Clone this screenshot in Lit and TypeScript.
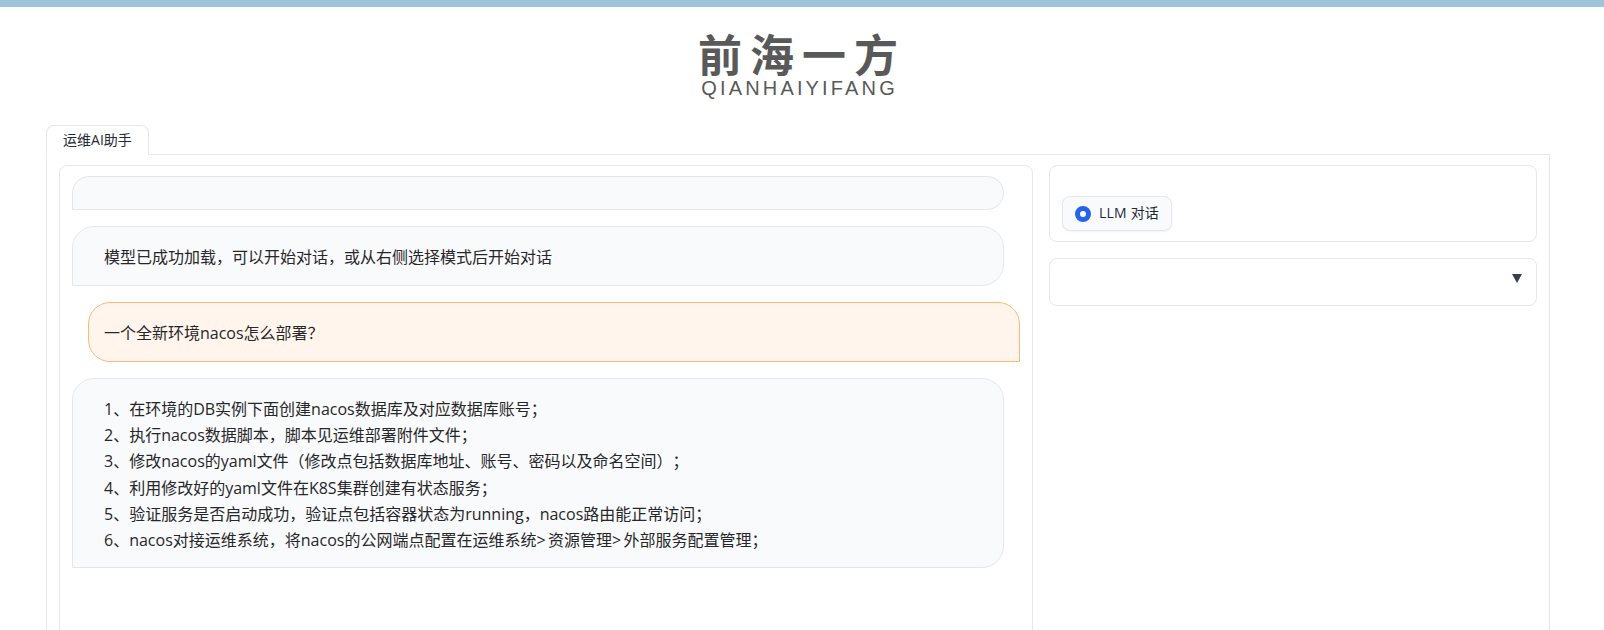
import { LitElement, html, css } from "lit";
import { customElement } from "lit/decorators.js";

const gt = html`<span class="gt">&gt;</span>`;
const answer = [
  html`1、在环境的DB实例下面创建nacos数据库及对应数据库账号；`,
  html`2、执行nacos数据脚本，脚本见运维部署附件文件；`,
  html`3、修改nacos的yaml文件（修改点包括数据库地址、账号、密码以及命名空间）；`,
  html`4、利用修改好的yaml文件在K8S集群创建有状态服务；`,
  html`5、验证服务是否启动成功，验证点包括容器状态为running，nacos路由能正常访问；`,
  html`6、nacos对接运维系统，将nacos的公网端点配置在运维系统${gt}资源管理${gt}外部服务配置管理；`,
];

@customElement("app-root")
export class AppRoot extends LitElement {
  static styles = css`
    :host {
      display: block;
      height: 630px;
      overflow: hidden;
      background: #fff;
      color: #27272a;
      font-family: "Open Sans", "Noto Sans CJK SC", sans-serif;
      font-size: 16px;
      font-feature-settings: "chws" 0, "palt" 0;
      text-spacing-trim: space-all;
    }
    .topbar { height: 7px; background: #a0c4da; }
    .logo {
      height: 118px;
      box-sizing: border-box;
      padding-right: 8px;
      display: flex;
      flex-direction: column;
      align-items: center;
      color: #595959;
    }
    .logo-cn {
      margin-top: 21px;
      font: 700 44px/50px "Noto Sans CJK SC", sans-serif;
      letter-spacing: 8px;
      margin-right: -8px;
    }
    .logo-en {
      font: 400 20px/20px "Liberation Sans", sans-serif;
      letter-spacing: 3.15px;
      margin-right: -3.15px;
    }
    .tabs { padding: 0 54px 0 46px; }
    .tab {
      box-sizing: border-box;
      width: 103px;
      height: 30px;
      margin-bottom: -1px;
      padding-bottom: 3px;
      position: relative;
      display: flex;
      align-items: center;
      justify-content: center;
      background: #fff;
      border: 1px solid #e5e7eb;
      border-bottom-color: #fff;
      border-radius: 8px 8px 0 0;
      font-size: 14px;
      color: #1f2937;
    }
    .panel {
      border: 1px solid #e5e7eb;
      padding: 10px 12px;
      display: grid;
      grid-template-columns: 974px 1fr;
      gap: 16px;
      height: 600px;
    }
    .card {
      box-sizing: border-box;
      border: 1px solid #e5e7eb;
      border-radius: 8px;
      background: #fff;
    }
    .chat {
      height: 600px;
      padding: 10px 28px 0 12px;
      display: flex;
      flex-direction: column;
      gap: 16px;
    }
    .bubble {
      border: 1px solid #e5e7eb;
      background: #f9fafb;
      border-radius: 22px 22px 22px 0;
      padding: 17px 31px 15px;
      line-height: 26px;
      box-sizing: border-box;
    }
    .bubble.empty { height: 34px; padding: 0; }
    .bubble.user {
      background: #fff5ec;
      border-color: #fdba74;
      border-radius: 22px 22px 0 22px;
      margin: 0 -16px 0 16px;
      padding-left: 15px;
    }
    .bubble.answer {
      height: 190px;
      padding: 17px 31px 0;
      line-height: 26.2px;
    }
    .gt { letter-spacing: 2.4px; }
    .side { display: flex; flex-direction: column; gap: 16px; }
    .mode {
      height: 77px;
      padding: 30px 12px 0;
    }
    .chip {
      box-sizing: border-box;
      width: 110px;
      height: 35px;
      display: flex;
      align-items: center;
      gap: 8px;
      padding: 0 0 3px 12px;
      border: 1px solid #e5e7eb;
      border-radius: 8px;
      background: #f9fafb;
      box-shadow: 0 1px 2px rgba(0, 0, 0, 0.05);
      font-size: 14px;
      letter-spacing: 0.2px;
      color: #1f2937;
    }
    .radio {
      box-sizing: border-box;
      width: 16px;
      height: 16px;
      margin-top: 3px;
      border-radius: 50%;
      border: 5px solid #2563eb;
      background: #fff;
    }
    .select {
      height: 48px;
      display: flex;
      align-items: center;
      justify-content: flex-end;
      padding: 0 14px 8px 0;
    }
    .caret {
      width: 0;
      height: 0;
      border-left: 5px solid transparent;
      border-right: 5px solid transparent;
      border-top: 9px solid #374151;
    }
  `;

  render() {
    return html`
      <div class="topbar"></div>
      <div class="logo">
        <div class="logo-cn">前海一方</div>
        <div class="logo-en">QIANHAIYIFANG</div>
      </div>
      <div class="tabs">
        <div class="tab">运维AI助手</div>
        <div class="panel">
          <div class="card chat">
            <div class="bubble empty"></div>
            <div class="bubble">模型已成功加载，可以开始对话，或从右侧选择模式后开始对话</div>
            <div class="bubble user">一个全新环境nacos怎么部署？</div>
            <div class="bubble answer">${answer.map((l) => html`<div>${l}</div>`)}</div>
          </div>
          <div class="side">
            <div class="card mode">
              <div class="chip"><span class="radio"></span>LLM 对话</div>
            </div>
            <div class="card select"><span class="caret"></span></div>
          </div>
        </div>
      </div>
    `;
  }
}
